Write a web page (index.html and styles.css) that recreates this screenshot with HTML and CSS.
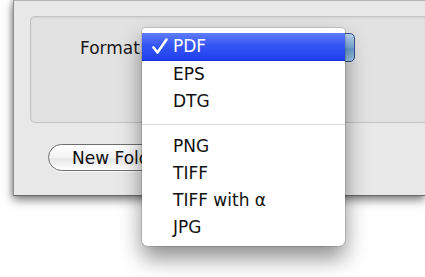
FILE: index.html
```html
<!DOCTYPE html>
<html lang="en">
  <head>
    <meta charset="UTF-8" />
    <meta name="viewport" content="width=device-width, initial-scale=1.0" />
    <title>Save dialog - Format menu</title>
    <link rel="stylesheet" href="styles.css">
  </head>
  <body>
    <div class="window">
      <!-- options box -->
      <div class="group-box">
        <div class="format-row">
          <span class="format-label">Format:</span>
          <div class="popup-button"></div>
        </div>
      </div>

      <div class="button-row">
        <button class="push-button">New Folder</button>
      </div>
    </div>

    <!-- open popup menu -->
    <ul class="popup-menu">
      <li class="menu-item selected">
        <svg class="check" width="16" height="17" viewBox="0 0 16 17">
          <path d="M1.5 9.5 L5.5 14.5 L14.5 1.5" fill="none" stroke="#fff" stroke-width="2.6" stroke-linecap="round" stroke-linejoin="round" />
        </svg>PDF
      </li>
      <li class="menu-item">EPS</li>
      <li class="menu-item">DTG</li>
      <li class="menu-separator"></li>
      <li class="menu-item">PNG</li>
      <li class="menu-item">TIFF</li>
      <li class="menu-item">TIFF with α</li>
      <li class="menu-item">JPG</li>
    </ul>
  </body>
</html>
```

FILE: styles.css
```css
body {
  font-family: "DejaVu Sans", "Liberation Sans", sans-serif;
  font-size: 17px;
  margin: 0;
  background-color: #fff;
  overflow: hidden;
  position: relative;
  height: 277px;
}

.window {
  margin-left: 13px;
  width: 412px;
  height: 196px;
  box-sizing: border-box;
  background-color: #e8e8e8;
  border-top: 1px solid #b4b4b4;
  border-left: 1px solid #8e8e8e;
  border-bottom: 1px solid #6a6a6a;
  box-shadow: 0 4px 9px rgba(0, 0, 0, 0.5), -2px 0 4px rgba(0, 0, 0, 0.15);
  padding-top: 15px;
}

.group-box {
  margin-left: 16px;
  height: 107px;
  box-sizing: border-box;
  background-color: #e2e2e2;
  border: 1px solid #c4c4c4;
  border-right: none;
  border-radius: 5px 0 0 5px;
  box-shadow: inset 0 1px 2px rgba(0, 0, 0, 0.08);
  padding: 16px 0 0 49px;
}

.format-row {
  display: flex;
  align-items: center;
  gap: 4px;
}

.format-label {
  color: #1a1a1a;
}

.popup-button {
  width: 205px;
  height: 29px;
  box-sizing: border-box;
  border: 1px solid #34558f;
  border-radius: 5px;
  background: linear-gradient(#bcd6f0, #7eaede 50%, #6a9fd6 55%, #a6d0f2);
}

.button-row {
  padding: 21px 0 0 34px;
}

.push-button {
  font-family: inherit;
  font-size: 17px;
  color: #111;
  height: 27px;
  width: 140px;
  text-align: left;
  padding: 0 0 0 23px;
  border: 1px solid #6e6e6e;
  border-radius: 14px;
  background: linear-gradient(#ffffff, #f2f2f2 50%, #e6e6e6 55%, #ffffff);
  box-shadow: 0 1px 1px rgba(255, 255, 255, 0.8);
}

.popup-menu {
  position: absolute;
  left: 142px;
  top: 28px;
  width: 203px;
  margin: 0;
  padding: 5px 0;
  list-style: none;
  background-color: #fff;
  border-radius: 4px 4px 6px 6px;
  box-shadow: 0 0 0 1px rgba(0, 0, 0, 0.12), 0 12px 22px rgba(0, 0, 0, 0.45);
}

.menu-item {
  height: 27px;
  line-height: 27px;
  padding-left: 31px;
  color: #111;
  position: relative;
}

.menu-item.selected {
  color: #fff;
  background: linear-gradient(#5f7cf8, #3656f4 45%, #1f3ff0);
  border-bottom: 1px solid #1733d6;
  height: 27px;
}

.check {
  position: absolute;
  left: 10px;
  top: 5px;
}

.menu-separator {
  height: 1px;
  margin: 9px 0 8px;
  background-color: #dcdcdc;
}
```
